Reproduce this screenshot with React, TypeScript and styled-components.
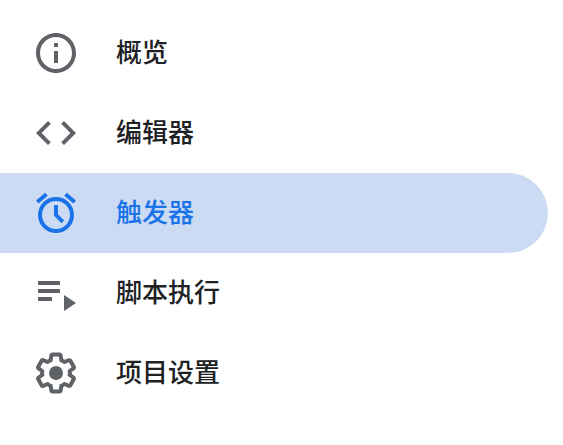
import React from "react";
import styled, { createGlobalStyle } from "styled-components";

const GlobalStyle = createGlobalStyle`
  body {
    margin: 0;
    background: #ffffff;
    font-family: Roboto, "Noto Sans CJK SC", sans-serif;
  }
`;

const Nav = styled.nav`
  padding: 13px 15px 32px 0;
`;

const NavList = styled.ul`
  margin: 0;
  padding: 0;
  list-style: none;
`;

const NavLink = styled.a<{ $active: boolean }>`
  display: flex;
  align-items: center;
  gap: 36px;
  height: 80px;
  padding: 0 32px;
  box-sizing: border-box;
  border-radius: 0 40px 40px 0;
  background: ${(p) => (p.$active ? "#cbdbf4" : "transparent")};
  color: ${(p) => (p.$active ? "#1a73e8" : "#202124")};
  text-decoration: none;
`;

const Icon = styled.svg<{ $active: boolean }>`
  flex: none;
  width: 48px;
  height: 48px;
  fill: ${(p) => (p.$active ? "#1a73e8" : "#5f6368")};
`;

const Label = styled.span`
  font-size: 26px;
  font-weight: 500;
  line-height: 40px;
  white-space: nowrap;
`;

const items = [
  {
    id: "overview",
    label: "概览",
    icon: (
      <path d="M11 7h2v2h-2zm0 4h2v6h-2zm1-9C6.48 2 2 6.48 2 12s4.48 10 10 10 10-4.48 10-10S17.52 2 12 2zm0 18c-4.41 0-8-3.59-8-8s3.59-8 8-8 8 3.59 8 8-3.59 8-8 8z" />
    ),
  },
  {
    id: "editor",
    label: "编辑器",
    icon: (
      <path d="M9.4 16.6L4.8 12l4.6-4.6L8 6l-6 6 6 6 1.4-1.4zm5.2 0l4.6-4.6-4.6-4.6L16 6l6 6-6 6-1.4-1.4z" />
    ),
  },
  {
    id: "triggers",
    label: "触发器",
    active: true,
    icon: (
      <>
        <path d="M22 5.72l-4.6-3.86-1.29 1.53 4.6 3.86L22 5.72zM7.88 3.39L6.6 1.86 2 5.71l1.29 1.53 4.59-3.85z" />
        <path d="M12 4a9 9 0 1 0 0 18 9 9 0 0 0 0-18zm0 16a7 7 0 1 1 0-14 7 7 0 0 1 0 14z" />
        <path d="M11 8h2v4.6l3.1 3.1-1.4 1.4L11 13.4z" />
      </>
    ),
  },
  {
    id: "executions",
    label: "脚本执行",
    icon: <path d="M3 6h11v2H3zm0 4h11v2H3zm0 4h7v2H3zm13-1v8l6-4z" />,
  },
  {
    id: "settings",
    label: "项目设置",
    icon: (
      <>
        <path d="M13.85 22.25h-3.7c-.74 0-1.36-.54-1.45-1.27l-.27-1.89c-.27-.14-.53-.29-.79-.46l-1.8.72c-.7.26-1.47-.03-1.81-.65L2.2 15.53c-.35-.66-.2-1.44.36-1.88l1.53-1.19c-.01-.15-.02-.3-.02-.46 0-.15.01-.31.02-.46l-1.52-1.19c-.59-.45-.74-1.26-.37-1.88l1.85-3.19c.34-.62 1.11-.9 1.79-.63l1.81.73c.26-.17.52-.32.78-.46l.27-1.91c.09-.7.71-1.25 1.44-1.25h3.7c.74 0 1.36.54 1.45 1.27l.27 1.89c.27.14.53.29.79.46l1.8-.72c.71-.26 1.48.03 1.82.65l1.84 3.18c.36.66.2 1.44-.36 1.88l-1.52 1.19c.01.15.02.3.02.46s-.01.31-.02.46l1.52 1.19c.56.45.72 1.23.37 1.86l-1.86 3.22c-.34.62-1.11.9-1.8.63l-1.8-.72c-.26.17-.52.32-.78.46l-.27 1.91c-.1.68-.72 1.22-1.46 1.22zm-3.23-2h2.76l.37-2.55.53-.22c.44-.18.88-.44 1.34-.78l.45-.34 2.38.96 1.38-2.4-2.03-1.58.07-.56c.03-.26.06-.51.06-.78s-.03-.53-.06-.78l-.07-.56 2.03-1.58-1.39-2.4-2.39.96-.45-.35c-.42-.32-.87-.58-1.33-.77l-.52-.22-.37-2.55h-2.76l-.37 2.55-.53.21c-.44.19-.88.44-1.34.79l-.45.33-2.38-.95-1.39 2.39 2.03 1.58-.07.56a7 7 0 0 0-.06.79c0 .26.02.53.06.78l.07.56-2.03 1.58 1.38 2.4 2.39-.96.45.35c.43.33.86.58 1.33.77l.53.22.38 2.55z" />
        <circle cx="12" cy="12" r="3.5" />
      </>
    ),
  },
];

export default function App() {
  return (
    <>
      <GlobalStyle />
      <Nav lang="zh-CN">
        <NavList>
          {items.map(({ id, label, icon, active = false }) => (
            <li key={id}>
              <NavLink
                href={`#${id}`}
                $active={active}
                aria-current={active ? "page" : undefined}
              >
                <Icon $active={active} viewBox="0 0 24 24" aria-hidden="true">
                  {icon}
                </Icon>
                <Label>{label}</Label>
              </NavLink>
            </li>
          ))}
        </NavList>
      </Nav>
    </>
  );
}
